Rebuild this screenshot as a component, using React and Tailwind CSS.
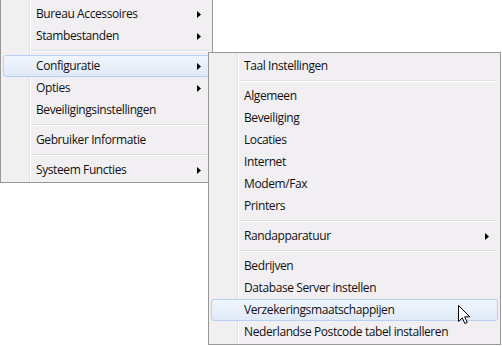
import React from 'react';

const leftItems = [
  { label: 'Bureau Accessoires', sub: true },
  { label: 'Stambestanden', sub: true },
  { sep: true },
  { label: 'Configuratie', sub: true, active: true },
  { label: 'Opties', sub: true },
  { label: 'Beveiligingsinstellingen' },
  { sep: true },
  { label: 'Gebruiker Informatie' },
  { sep: true },
  { label: 'Systeem Functies', sub: true },
];

const rightItems = [
  { label: 'Taal Instellingen' },
  { sep: true },
  { label: 'Algemeen' },
  { label: 'Beveiliging' },
  { label: 'Locaties' },
  { label: 'Internet' },
  { label: 'Modem/Fax' },
  { label: 'Printers' },
  { sep: true },
  { label: 'Randapparatuur', sub: true },
  { sep: true },
  { label: 'Bedrijven' },
  { label: 'Database Server instellen' },
  { label: 'Verzekeringsmaatschappijen', active: true },
  { label: 'Nederlandse Postcode tabel installeren' },
];

const Arrow = () => (
  <svg width="4" height="7" viewBox="0 0 4 7" className="shrink-0">
    <path d="M0 0 L4 3.5 L0 7 Z" fill="#000" />
  </svg>
);

const MenuRow = ({ item }) => {
  if (item.sep) {
    return (
      <div className="h-[8px] flex flex-col justify-center pl-[28px] pr-[1px]">
        <div className="h-px bg-[#e0e0e0]" />
        <div className="h-px bg-white" />
      </div>
    );
  }
  return (
    <div
      className={`h-[22px] flex items-center pl-[32px] pr-[8px] rounded-[3px] border ${
        item.active
          ? 'border-[#b4d0f2] bg-linear-to-b from-[#f1f6fd] to-[#dfe9f7]'
          : 'border-transparent'
      }`}
    >
      <span className="flex-1 text-[12px] tracking-[-0.4px] text-[#111] whitespace-nowrap leading-none">
        {item.label}
      </span>
      {item.sub && <Arrow />}
    </div>
  );
};

const Menu = ({ items, className }) => (
  <div className={`relative bg-[#f1eff1] border-[#979797] px-[2px] pb-px ${className}`}>
    {/* gutter */}
    <div className="absolute top-0 bottom-0 left-[28px] w-[2px] flex">
      <div className="w-px bg-[#e2e1e2]" />
      <div className="w-px bg-white" />
    </div>
    <div className="relative flex flex-col">
      {items.map((item, i) => (
        <MenuRow key={i} item={item} />
      ))}
    </div>
  </div>
);

export default function App() {
  return (
    <div
      className="relative w-[502px] h-[346px] bg-white overflow-hidden"
      style={{ fontFamily: '"Open Sans", "Noto Sans", sans-serif' }}
    >
      <Menu items={leftItems} className="w-[213px] border-l border-r border-b pt-[3px]" />

      {/* submenu */}
      <div className="absolute left-[208px] top-[52px]">
        <Menu items={rightItems} className="w-[293px] border pt-[2px]" />
      </div>

      {/* mouse cursor */}
      <svg className="absolute left-[458px] top-[305px]" width="13" height="20" viewBox="0 0 13 20">
        <path
          d="M0.5 0.5 L0.5 16.5 L4.3 12.8 L6.8 18.5 L9.2 17.5 L6.7 11.8 L11.8 11.8 Z"
          fill="#fff"
          stroke="#000"
          strokeWidth="1"
          strokeLinejoin="miter"
        />
      </svg>
    </div>
  );
}
